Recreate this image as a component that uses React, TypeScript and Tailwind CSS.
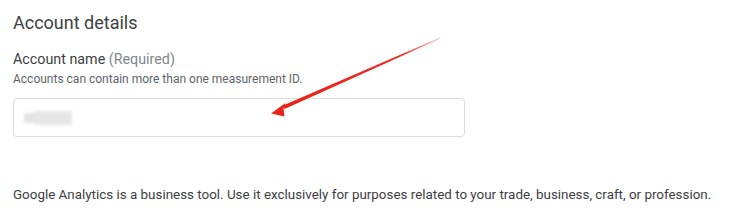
export default function App() {
  return (
    <div
      className="relative h-[216px] w-[729px] overflow-hidden bg-white text-[#3c4043]"
      style={{ fontFamily: 'Roboto, "Liberation Sans", Arial, sans-serif' }}
    >
      <div className="flex flex-col px-[13px] pt-[12px]">
        <h2 className="text-[18px] leading-[22px] text-[#3c4043]">Account details</h2>

        <div className="mt-[16px] text-[14.3px] leading-[18px] text-[#3c4043]">
          Account name <span className="text-[#80868b]">(Required)</span>
        </div>
        <p className="mt-[4px] text-[12px] leading-[15px] text-[#5f6368]">
          Accounts can contain more than one measurement ID.
        </p>

        {/* 입력칸 — 값은 원본에서 흐리게 가려져 있음 */}
        <div className="mt-[11px] flex h-[39px] w-[452px] items-center rounded-[4px] border border-[#dadce0] px-[10px]">
          <div className="flex items-center blur-[1.5px]">
            <div className="h-[10px] w-[10px] bg-[#e3e3e3]" />
            <div className="h-[14px] w-[38px] bg-[#e6e6e6]" />
          </div>
        </div>

        <p className="mt-[49px] text-[13.4px] leading-[17px] text-[#3c4043]">
          Google Analytics is a business tool. Use it exclusively for purposes related to your trade, business, craft, or
          profession.
        </p>
      </div>

      {/* 빨간 화살표 주석 */}
      <svg className="pointer-events-none absolute inset-0" width="729" height="216" viewBox="0 0 729 216">
        <defs>
          <linearGradient id="shaft" x1="440" y1="38" x2="284" y2="107" gradientUnits="userSpaceOnUse">
            <stop offset="0" stopColor="#f0412f" stopOpacity="0.3" />
            <stop offset="0.25" stopColor="#ec2a1f" />
            <stop offset="1" stopColor="#e8231a" />
          </linearGradient>
        </defs>
        <polygon points="284.6,109 283,105.6 440.2,37.6 440.5,38.4" fill="url(#shaft)" />
        <polygon points="271,113.5 285.5,103 283.5,108.5 284.5,116.5" fill="#e8231a" />
      </svg>
    </div>
  );
}
